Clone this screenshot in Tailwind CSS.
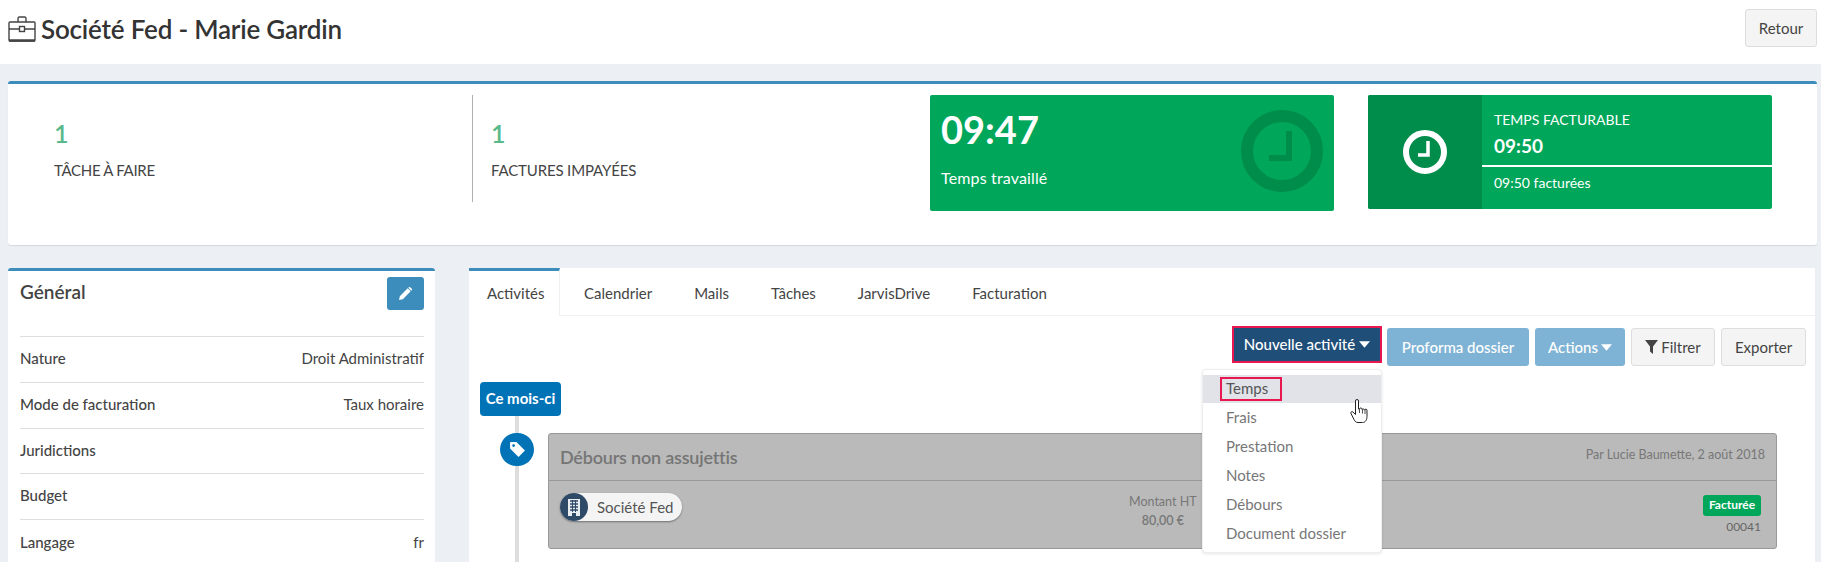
<!DOCTYPE html>
<html lang="fr">
<head>
    <meta charset="UTF-8">
    <title>Société Fed - Marie Gardin</title>
    <script src="https://cdn.jsdelivr.net/npm/@tailwindcss/browser@4"></script>
</head>
<body class="bg-[#ecf0f5] w-[1821px] h-[562px] overflow-hidden text-[#444] text-[15px] [font-family:Lato,sans-serif]">
    <!-- Page header -->
    <header class="bg-white h-[64px] flex justify-between pl-[8px] pr-[4px]">
        <div class="flex items-center gap-[5px] h-[58px]">
            <svg class="w-[28px] h-[26px]" viewBox="0 0 28 26" fill="none" stroke="#444" stroke-width="1.4">
                <path d="M10 6V2.5a1.5 1.5 0 0 1 1.5-1.5h5A1.5 1.5 0 0 1 18 2.500V6"/>
                <rect x="1" y="6" width="26" height="19" rx="1"/>
                <path d="M1 13h10M17 13h10"/>
                <rect x="11.500" y="10.500" width="5" height="5"/>
                <path d="M1 24.500h26" stroke-width="2.500"/>
            </svg>
            <h1 class="text-[26px] font-semibold text-[#333] tracking-[-0.2px]">Société Fed - Marie Gardin</h1>
        </div>
        <button class="mt-[9px] w-[72px] h-[38px] bg-[#f4f4f4] border border-[#ddd] rounded-[3px] text-[15px]">Retour</button>
    </header>

    <main class="pl-[8px] pr-[4px] pt-[17px]">
        <!-- Summary card -->
        <section class="bg-white h-[164px] border-t-[3px] border-[#3c8dbc] rounded-[3px] shadow-[0_1px_1px_rgba(0,0,0,0.1)] pt-[11px] flex items-start">
            <div class="w-[465px] h-[107px] border-r border-[#b0b0b0] pl-[46px] pt-[22px]">
                <div class="text-[25px] leading-[32px] font-semibold text-[#5ab98b]">1</div>
                <div class="mt-[11px] leading-[20px] text-[#444] tracking-[-0.3px]">TÂCHE À FAIRE</div>
            </div>
            <div class="w-[457px] pl-[18px] pt-[22px]">
                <div class="text-[25px] leading-[32px] font-semibold text-[#5ab98b]">1</div>
                <div class="mt-[11px] leading-[20px] text-[#444] tracking-[-0.15px]">FACTURES IMPAYÉES</div>
            </div>
            <div class="w-[404px] h-[116px] bg-[#00a65a] rounded-[2px] text-white pl-[11px] pt-[11px] flex justify-between">
                <div>
                    <div class="text-[38px] leading-[46px] font-bold">09:47</div>
                    <div class="mt-[15px] text-[16px] leading-[22px] tracking-[0.15px]">Temps travaillé</div>
                </div>
                <svg class="w-[82px] h-[82px] mt-[4px] mr-[11px]" viewBox="0 0 82 82" fill="none" stroke="#008d4c">
                    <circle cx="41" cy="41" r="35" stroke-width="12"/>
                    <path d="M48 21v27H28" stroke-width="6"/>
                </svg>
            </div>
            <div class="w-[404px] h-[114px] ml-[34px] bg-[#00a65a] rounded-[2px] text-white flex">
                <div class="w-[114px] bg-[#008d4c] rounded-l-[2px] flex items-center justify-center">
                    <svg class="w-[44px] h-[44px]" viewBox="0 0 44 44" fill="none" stroke="#fff">
                        <circle cx="22" cy="22" r="19" stroke-width="6"/>
                        <path d="M25 11v14H15" stroke-width="3.500"/>
                    </svg>
                </div>
                <div class="flex-1">
                    <div class="h-[72px] pl-[12px] pt-[15px] border-b-[2px] border-white">
                        <div class="text-[14px] leading-[20px]">TEMPS FACTURABLE</div>
                        <div class="mt-[5px] text-[19px] leading-[22px] font-bold">09:50</div>
                    </div>
                    <div class="pl-[12px] pt-[6px] text-[14px] leading-[20px]">09:50 facturées</div>
                </div>
            </div>
        </section>

        <div class="flex mt-[23px] gap-[34px]">
            <!-- General card -->
            <aside class="w-[427px] h-[300px] bg-white border-t-[3px] border-[#3c8dbc] rounded-t-[3px] pl-[12px] pr-[11px]">
                <div class="h-[65px] flex justify-between items-start">
                    <h2 class="mt-[9px] text-[19px] leading-[24px] font-semibold text-[#444]">Général</h2>
                    <button class="mt-[6px] w-[37px] h-[33px] bg-[#3c8dbc] rounded-[3px] flex items-center justify-center">
                        <svg class="w-[13px] h-[13px]" viewBox="0 0 13 13" fill="#fff"><path d="M0 13l.8-3.800L8.700 1.300l3 3-7.900 7.900zM9.600.4a1.300 1.300 0 0 1 1.800 0l1.200 1.200a1.300 1.300 0 0 1 0 1.800l-.3.300-3-3z"/></svg>
                    </button>
                </div>
                <dl class="divide-y divide-[#ddd] border-t border-[#ddd] font-medium">
                    <div class="h-[45.750px] pb-[2px] flex justify-between items-center"><dt>Nature</dt><dd class="font-normal">Droit Administratif</dd></div>
                    <div class="h-[45.750px] pb-[2px] flex justify-between items-center"><dt>Mode de facturation</dt><dd class="font-normal">Taux horaire</dd></div>
                    <div class="h-[45.750px] pb-[2px] flex items-center"><dt>Juridictions</dt></div>
                    <div class="h-[45.750px] pb-[2px] flex items-center"><dt>Budget</dt></div>
                    <div class="h-[45.750px] pb-[2px] flex justify-between items-center"><dt>Langage</dt><dd class="font-normal">fr</dd></div>
                </dl>
            </aside>

            <!-- Activity card -->
            <section class="relative w-[1346px] h-[300px] bg-white">
                <nav class="h-[48px] flex border-b border-[#f0f0f0]">
                    <a class="w-[91px] h-[48px] bg-white border-t-[3px] border-r border-t-[#3c8dbc] border-r-[#f0f0f0] pl-[18px] pt-[11px]">Activités</a>
                    <a class="ml-[24px] pt-[14px]">Calendrier</a>
                    <a class="ml-[42px] pt-[14px]">Mails</a>
                    <a class="ml-[42px] pt-[14px]">Tâches</a>
                    <a class="ml-[42px] pt-[14px]">JarvisDrive</a>
                    <a class="ml-[42px] pt-[14px]">Facturation</a>
                </nav>

                <div class="h-[38px] mt-[12px] pr-[9px] flex justify-end gap-[6px] text-[15px]">
                    <button class="w-[150px] -mt-[2px] h-[37px] mr-[-1px] bg-[#1f4e79] border-[2px] border-[#e8174f] text-white font-medium flex items-center justify-center gap-[4px]">
                        Nouvelle activité
                        <svg class="w-[11px] h-[7px]" viewBox="0 0 10 6" fill="#fff"><path d="M0 0h10L5 6z"/></svg>
                    </button>
                    <button class="w-[142px] bg-[#7fb3d5] rounded-[3px] text-white font-medium">Proforma dossier</button>
                    <button class="w-[90px] bg-[#7fb3d5] rounded-[3px] text-white font-medium flex items-center justify-center gap-[3px]">
                        Actions
                        <svg class="w-[11px] h-[7px]" viewBox="0 0 10 6" fill="#fff"><path d="M0 0h10L5 6z"/></svg>
                    </button>
                    <button class="w-[84px] bg-[#f4f4f4] border border-[#ddd] rounded-[3px] flex items-center justify-center gap-[3px]">
                        <svg class="w-[13px] h-[14px]" viewBox="0 0 13 14" fill="#444"><path d="M0 0h13L8 6.500V14L5 11.500V6.500z"/></svg>
                        Filtrer
                    </button>
                    <button class="w-[85px] bg-[#f4f4f4] border border-[#ddd] rounded-[3px]">Exporter</button>
                </div>

                <!-- Timeline -->
                <div class="relative mt-[16px] pl-[11px]">
                    <div class="absolute left-[46px] top-[30px] w-[4px] h-[160px] bg-[#ddd]"></div>
                    <span class="relative inline-flex items-center justify-center w-[81px] h-[34px] pb-[2px] bg-[#0073b7] rounded-[4px] text-white font-bold text-[15px]">Ce mois-ci</span>
                    <div class="relative flex mt-[17px]">
                        <div class="ml-[20px] w-[34px] h-[33px] rounded-full bg-[#0073b7] flex items-center justify-center">
                            <svg class="w-[17px] h-[17px]" viewBox="0 0 16 16" fill="#fff"><path d="M1 1.800A.8.800 0 0 1 1.800 1H7l8 8-6 6-8-8zM4.300 5.600a1.300 1.300 0 1 0 0-2.600 1.300 1.300 0 0 0 0 2.600z" fill-rule="evenodd"/></svg>
                        </div>
                        <article class="ml-[14px] w-[1229px] h-[116px] bg-[#bababa] border border-[#999] rounded-[3px]">
                            <div class="h-[47px] border-b border-[#999] pl-[11px] pr-[11px] flex justify-between items-center">
                                <h3 class="text-[18px] font-semibold text-[#757575] tracking-[-0.2px]">Débours non assujettis</h3>
                                <span class="text-[12.500px] text-[#777] -mt-[4px]">Par Lucie Baumette, 2 août 2018</span>
                            </div>
                            <div class="flex justify-between pl-[11px] pr-[15px] pt-[12px]">
                                <div class="w-[122px] h-[28px] bg-[#f4f4f4] rounded-full shadow-[0_1px_2px_rgba(0,0,0,0.4)] flex items-center gap-[9px]">
                                    <span class="w-[28px] h-[28px] rounded-full bg-[#2f4a67] flex items-center justify-center">
                                        <svg class="w-[14px] h-[17px]" viewBox="0 0 14 17">
                                            <rect x="1" y="0" width="12" height="17" fill="#e8edf2"/>
                                            <path d="M3 2h8M3 5h8M3 8h8M3 11h8" stroke="#2f4a67" stroke-width="1.500"/>
                                            <path d="M5.500 1v12M8.500 1v12" stroke="#2f4a67" stroke-width="1"/>
                                            <rect x="5" y="14" width="4" height="3" fill="#2f4a67"/>
                                        </svg>
                                    </span>
                                    <span class="text-[15px] text-[#555]">Société Fed</span>
                                </div>
                                <div class="ml-[447px] text-center text-[12.500px] text-[#777] leading-[19px] -mt-[1px]">
                                    <div>Montant HT</div>
                                    <div class="font-semibold">80,00 €</div>
                                </div>
                                <div class="ml-auto text-right -mt-[1px]">
                                    <span class="inline-flex items-center justify-center w-[58px] h-[21px] bg-[#00a65a] rounded-[3px] text-white text-[12px] font-bold">Facturée</span>
                                    <div class="mt-[3px] text-[12px] text-[#666] leading-[16px]">00041</div>
                                </div>
                            </div>
                        </article>
                    </div>
                </div>

                <!-- Open dropdown -->
                <ul class="absolute left-[733px] top-[101px] w-[180px] h-[184px] bg-white border border-[#eee] rounded-[4px] shadow-[0_1px_3px_rgba(0,0,0,0.1)] pt-[5px] text-[#777] text-[15px]">
                    <li class="h-[28px] mb-[1px] pb-[2px] bg-[#e1e3e9] pl-[23px] flex items-center text-[#555] relative">
                        Temps
                        <span class="absolute left-[17px] top-[2px] w-[62px] h-[24px] border-[2px] border-[#e8174f]"></span>
                    </li>
                    <li class="h-[29px] pb-[2px] pl-[23px] flex items-center">Frais</li>
                    <li class="h-[29px] pb-[2px] pl-[23px] flex items-center">Prestation</li>
                    <li class="h-[29px] pb-[2px] pl-[23px] flex items-center">Notes</li>
                    <li class="h-[29px] pb-[2px] pl-[23px] flex items-center">Débours</li>
                    <li class="h-[29px] pb-[2px] pl-[23px] flex items-center">Document dossier</li>
                </ul>

                <!-- Mouse pointer -->
                <svg class="absolute left-[881px] top-[131px] w-[18px] h-[25px]" viewBox="0 0 18 25" fill="#fff" stroke="#222" stroke-width="1" stroke-linejoin="round">
                    <path d="M5.500 2a1.500 1.500 0 0 1 3 0v8l1-.2a1.300 1.300 0 0 1 2.500.300l.1.500a1.300 1.300 0 0 1 2.400.500 1.300 1.300 0 0 1 2.500.800v5.600c0 3-1.500 6-4.500 6H8c-2 0-3-1-4-3L1 14.500c-.8-1.500 1-2.500 2-1.500l2.500 2.500z"/>
                    <path d="M9.500 10v4M12.500 10.500v4M15 11v4" fill="none" stroke-width=".8"/>
                </svg>
            </section>
        </div>
    </main>
</body>
</html>
